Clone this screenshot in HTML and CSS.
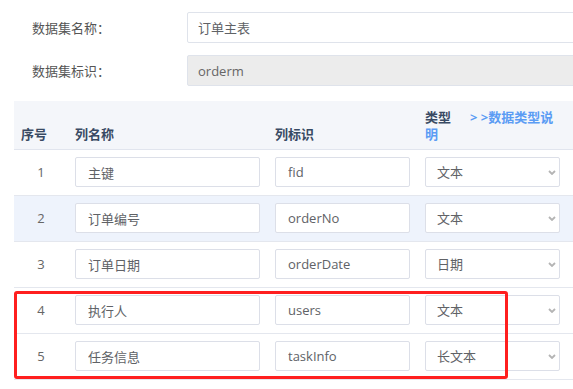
FILE: index.html
```html
<!DOCTYPE html>
<html lang="zh-CN">
<head>
  <meta charset="UTF-8">
  <meta name="viewport" content="width=device-width, initial-scale=1.0">
  <title>数据集设置</title>
  <link rel="stylesheet" href="styles.css">
</head>
<body>

  <div class="page">
    <div class="form-row">
      <label class="form-label">数据集名称：</label>
      <input class="form-input" type="text" value="订单主表">
    </div>
    <div class="form-row">
      <label class="form-label">数据集标识：</label>
      <input class="form-input is-disabled" type="text" value="orderm" disabled>
    </div>

    <!-- 列定义表格 -->
    <div class="table-wrap">
      <table class="col-table">
        <colgroup>
          <col class="c-no">
          <col class="c-name">
          <col class="c-code">
          <col class="c-type">
        </colgroup>
        <thead>
          <tr>
            <th>序号</th>
            <th>列名称</th>
            <th>列标识</th>
            <th><div class="type-head">类型<a class="type-link" href="#">&gt;&nbsp;&gt;数据类型说明</a></div></th>
          </tr>
        </thead>
        <tbody>
          <tr>
            <td class="no">1</td>
            <td><input class="cell-input name" type="text" value="主键"></td>
            <td><input class="cell-input code" type="text" value="fid"></td>
            <td><span class="select-box"><select><option>文本</option></select><svg class="arrow" width="8" height="5" viewBox="0 0 8 5"><path d="M1 1 L4 4 L7 1" fill="none" stroke="#b4b4b4" stroke-width="1.8"/></svg></span></td>
          </tr>
          <tr class="active">
            <td class="no">2</td>
            <td><input class="cell-input name" type="text" value="订单编号"></td>
            <td><input class="cell-input code" type="text" value="orderNo"></td>
            <td><span class="select-box"><select><option>文本</option></select><svg class="arrow" width="8" height="5" viewBox="0 0 8 5"><path d="M1 1 L4 4 L7 1" fill="none" stroke="#b4b4b4" stroke-width="1.8"/></svg></span></td>
          </tr>
          <tr>
            <td class="no">3</td>
            <td><input class="cell-input name" type="text" value="订单日期"></td>
            <td><input class="cell-input code" type="text" value="orderDate"></td>
            <td><span class="select-box"><select><option>日期</option></select><svg class="arrow" width="8" height="5" viewBox="0 0 8 5"><path d="M1 1 L4 4 L7 1" fill="none" stroke="#b4b4b4" stroke-width="1.8"/></svg></span></td>
          </tr>
          <tr>
            <td class="no">4</td>
            <td><input class="cell-input name" type="text" value="执行人"></td>
            <td><input class="cell-input code" type="text" value="users"></td>
            <td><span class="select-box"><select><option>文本</option></select><svg class="arrow" width="8" height="5" viewBox="0 0 8 5"><path d="M1 1 L4 4 L7 1" fill="none" stroke="#b4b4b4" stroke-width="1.8"/></svg></span></td>
          </tr>
          <tr>
            <td class="no">5</td>
            <td><input class="cell-input name" type="text" value="任务信息"></td>
            <td><input class="cell-input code" type="text" value="taskInfo"></td>
            <td><span class="select-box"><select><option>长文本</option></select><svg class="arrow" width="8" height="5" viewBox="0 0 8 5"><path d="M1 1 L4 4 L7 1" fill="none" stroke="#b4b4b4" stroke-width="1.8"/></svg></span></td>
          </tr>
        </tbody>
      </table>

      <!-- 红色标注框 -->
      <div class="mark-box"></div>
    </div>
  </div>

</body>
</html>
```

FILE: styles.css
```css
html, body {
  margin: 0;
  padding: 0;
  overflow: hidden;
  background: #fff;
}

body {
  font-family: "Open Sans", "Noto Sans CJK SC", sans-serif;
  font-size: 13px;
  color: #606266;
}

.page {
  width: 640px;
  padding: 12px 0 0 14px;
}

/* 上方表单 */
.form-row {
  display: flex;
  align-items: center;
  height: 31px;
  margin-bottom: 12px;
}

.form-label {
  flex: 0 0 173px;
  padding-left: 18px;
  box-sizing: border-box;
  color: #555;
  line-height: 20px;
}

.form-input {
  flex: 0 0 430px;
  width: 430px;
  height: 31px;
  box-sizing: border-box;
  border: 1px solid #dfe3eb;
  border-radius: 2px;
  padding: 0 10px;
  font: inherit;
  color: #606266;
  background: #fff;
  outline: none;
}

.form-input.is-disabled {
  background: #ececec;
  color: #666;
  -webkit-text-fill-color: #666;
}

/* 表格 */
.table-wrap {
  position: relative;
  margin-top: 15px;
}

.col-table {
  width: 620px;
  table-layout: fixed;
  border-collapse: collapse;
}

.c-no { width: 54px; }
.c-name { width: 200px; }
.c-code { width: 150px; }
.c-type { width: 216px; }

.col-table th {
  background: #f4f6fa;
  color: #394a63;
  font-weight: bold;
  text-align: left;
  vertical-align: bottom;
  line-height: 17px;
  padding: 8px 7px 6px 7px;
  border-bottom: 1px solid #e1e5ee;
}

.type-head {
  width: 135px;
}

.type-link {
  margin-left: 19px;
  color: #5b9cf4;
  text-decoration: none;
}

.col-table td {
  padding: 7px 8px 8px 7px;
  border-bottom: 1px solid #e4e7ee;
  vertical-align: middle;
}

.col-table tr.active td {
  background: #eef3fc;
}

.col-table td.no {
  text-align: center;
  color: #666;
  padding-left: 0;
  padding-right: 0;
}

.cell-input {
  display: block;
  height: 30px;
  box-sizing: border-box;
  border: 1px solid #dcdfe8;
  border-radius: 2px;
  padding: 0 12px;
  font: inherit;
  color: #606266;
  background: #fff;
  outline: none;
}

.cell-input.name { width: 185px; }
.cell-input.code { width: 135px; }

.select-box {
  position: relative;
  display: block;
  width: 135px;
}

.select-box select {
  display: block;
  width: 135px;
  height: 30px;
  box-sizing: border-box;
  border: 1px solid #dcdfe8;
  border-radius: 2px;
  padding: 0 0 0 11px;
  font: inherit;
  color: #606266;
  background: #fff;
  -webkit-appearance: none;
  appearance: none;
  outline: none;
}

.select-box .arrow {
  position: absolute;
  right: 4px;
  top: 13px;
}

.mark-box {
  position: absolute;
  left: 0;
  top: 190px;
  width: 494px;
  height: 88px;
  box-sizing: border-box;
  border: 3px solid #ff1f1f;
  border-radius: 3px;
  pointer-events: none;
}
```
